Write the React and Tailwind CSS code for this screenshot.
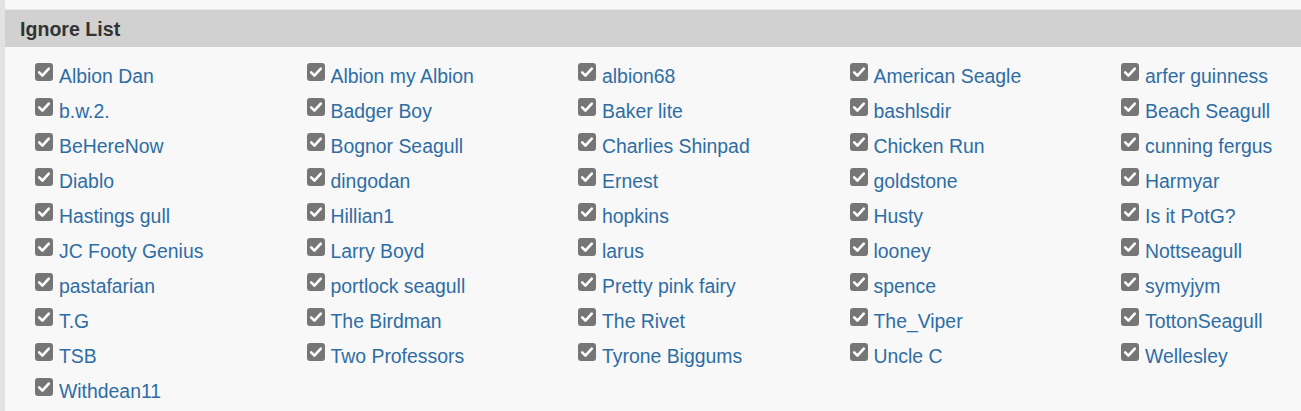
import React from 'react';

const names = [
  'Albion Dan', 'Albion my Albion', 'albion68', 'American Seagle', 'arfer guinness',
  'b.w.2.', 'Badger Boy', 'Baker lite', 'bashlsdir', 'Beach Seagull',
  'BeHereNow', 'Bognor Seagull', 'Charlies Shinpad', 'Chicken Run', 'cunning fergus',
  'Diablo', 'dingodan', 'Ernest', 'goldstone', 'Harmyar',
  'Hastings gull', 'Hillian1', 'hopkins', 'Husty', 'Is it PotG?',
  'JC Footy Genius', 'Larry Boyd', 'larus', 'looney', 'Nottseagull',
  'pastafarian', 'portlock seagull', 'Pretty pink fairy', 'spence', 'symyjym',
  'T.G', 'The Birdman', 'The Rivet', 'The_Viper', 'TottonSeagull',
  'TSB', 'Two Professors', 'Tyrone Biggums', 'Uncle C', 'Wellesley',
  'Withdean11',
];

function CheckIcon() {
  return (
    <svg width="18" height="18" viewBox="0 0 18 18" className="shrink-0 mt-[4px]">
      <rect x="0" y="0" width="18" height="18" rx="3" fill="#767676" />
      <path d="M4.2 9.4 L7.4 12.6 L13.8 5.6" fill="none" stroke="#fff" strokeWidth="2.6" strokeLinecap="round" strokeLinejoin="round" />
    </svg>
  );
}

function IgnoreItem({ name }) {
  return (
    <label className="flex items-start gap-[6px] h-[35px] cursor-pointer">
      <CheckIcon />
      <span className="text-[19.4px] leading-[35px] text-[#2e6da4] whitespace-nowrap">{name}</span>
    </label>
  );
}

export default function App() {
  return (
    <div
      className="min-h-[411px] bg-[#f8f8f8] border-l-[5px] border-[#e2e2e2] overflow-hidden"
      style={{ fontFamily: '"Liberation Sans", Arial, sans-serif' }}
    >
      <div className="h-[10px] border-b border-[#e6e6e6]" />
      <div className="h-[37px] bg-[#d1d1d1] pl-[15px] flex items-center">
        <h2 className="text-[19.6px] font-bold text-[#333] leading-none pt-[2px]">Ignore List</h2>
      </div>
      <div className="pl-[30px] pt-[12px] grid grid-cols-[repeat(5,271.5px)]">
        {names.map((n) => (
          <IgnoreItem key={n} name={n} />
        ))}
      </div>
    </div>
  );
}
